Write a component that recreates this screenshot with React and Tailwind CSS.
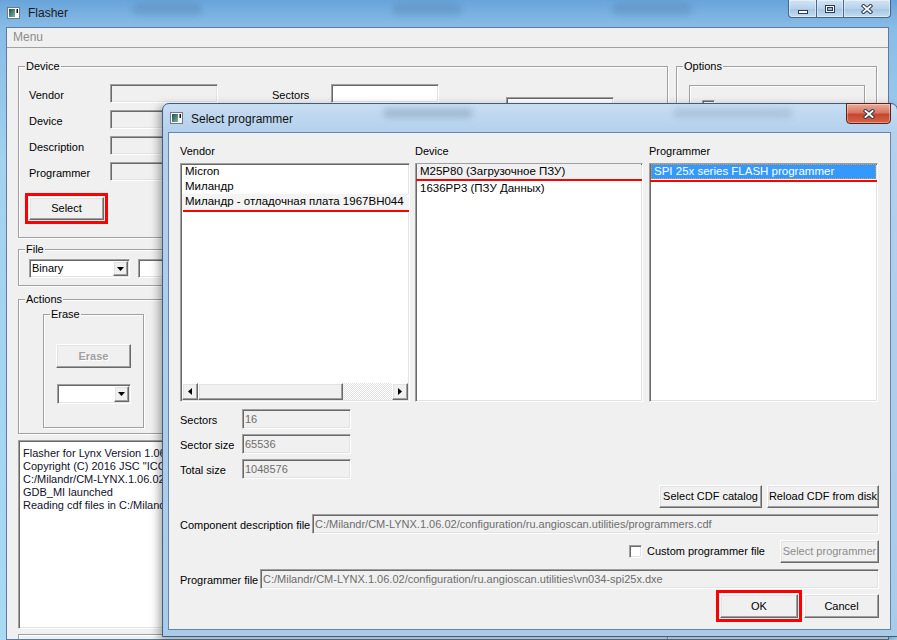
import React from "react";

// classic win32 3d borders
const sunken =
  "border border-t-[#a0a0a0] border-l-[#a0a0a0] border-r-white border-b-white shadow-[inset_1px_1px_0_#696969,inset_-1px_-1px_0_#e3e3e3]";
const raised =
  "border border-t-white border-l-white border-r-[#696969] border-b-[#696969] bg-[#f0f0f0] shadow-[inset_-1px_-1px_0_#a0a0a0,inset_1px_1px_0_#e3e3e3]";
const etched = "border border-[#a0a0a0] shadow-[inset_1px_1px_0_#ffffff,1px_1px_0_#ffffff]";

function AppIcon({ className = "" }) {
  return (
    <svg width="13" height="12" viewBox="0 0 13 12" className={`shrink-0 ${className}`}>
      <defs>
        <linearGradient id="appicon" x1="0" y1="0" x2="1" y2="1">
          <stop offset="0" stopColor="#1d4a55" />
          <stop offset="1" stopColor="#80b89c" />
        </linearGradient>
      </defs>
      <rect x="0.5" y="0.5" width="12" height="11" fill="#f7f7f7" stroke="#6f7b86" />
      <rect x="2" y="2" width="6" height="8" fill="url(#appicon)" />
      <rect x="9.5" y="2" width="1.5" height="4" fill="#111" />
    </svg>
  );
}

function XGlyph() {
  return (
    <svg width="12" height="10" viewBox="0 0 12 10">
      <path d="M2.5 2 L9.5 8 M9.5 2 L2.5 8" stroke="#2b3a4e" strokeWidth="3.8" strokeLinecap="square" />
      <path d="M2.5 2 L9.5 8 M9.5 2 L2.5 8" stroke="#ffffff" strokeWidth="1.9" strokeLinecap="square" />
    </svg>
  );
}

function Group({ title, className = "", children }) {
  return (
    <div className={`relative ${etched} ${className}`}>
      <span className="absolute -top-[7px] left-[6px] bg-[#f0f0f0] px-[1px] leading-[13px]">{title}</span>
      {children}
    </div>
  );
}

function Combo({ className = "", text = "" }) {
  return (
    <div className={`${sunken} flex bg-white ${className}`}>
      <span className="flex-1 pl-[2px] leading-[16px]">{text}</span>
      <div className={`${raised} m-[1px] flex w-[15px] items-center justify-center`}>
        <svg width="7" height="4" viewBox="0 0 7 4">
          <path d="M0 0H7L3.5 4Z" fill="#000" />
        </svg>
      </div>
    </div>
  );
}

function MainWindow() {
  return (
    <div className="flex h-full flex-col bg-[linear-gradient(180deg,#68a4da_0px,#88bce6_27px,#a3d1ef_160px,#a9d9f3_100%)]">
      {/* title bar */}
      <div className="flex h-[27px] shrink-0 items-start">
        <AppIcon className="ml-[7px] mt-[7px]" />
        <span className="ml-[8px] mt-[5px] shrink-0 whitespace-nowrap text-[12px] leading-[16px] text-[#1a1a1a]">Flasher</span>
        <span className="ml-[64px] mt-[3px] h-[12px] w-[70px] shrink-0 rounded-full bg-[#4f79a6] opacity-30 blur-[3px]" />
        <span className="ml-[190px] mt-[3px] h-[12px] w-[70px] shrink-0 rounded-full bg-[#4f79a6] opacity-30 blur-[3px]" />
        <span className="ml-[150px] mt-[3px] h-[12px] w-[80px] shrink-0 rounded-full bg-[#4f79a6] opacity-30 blur-[3px]" />
        <div className="ml-auto mr-[6px] flex h-[18px] shrink-0">
          <div className="flex w-[29px] items-end justify-center rounded-bl-[4px] border border-t-0 border-[#45658c] bg-[linear-gradient(180deg,#d2e4f4,#b7d2eb_50%,#a5c5e5_51%,#c3dcf1)] pb-[3px] shadow-[inset_0_0_0_1px_rgba(255,255,255,0.45)]">
            <svg width="10" height="4" viewBox="0 0 10 4">
              <rect x="0.5" y="0.5" width="9" height="3" fill="#fff" stroke="#2b3a4e" />
            </svg>
          </div>
          <div className="flex w-[27px] items-center justify-center border-b border-r border-[#45658c] bg-[linear-gradient(180deg,#d2e4f4,#b7d2eb_50%,#a5c5e5_51%,#c3dcf1)] shadow-[inset_0_0_0_1px_rgba(255,255,255,0.45)]">
            <svg width="10" height="8" viewBox="0 0 10 8">
              <rect x="0.5" y="0.5" width="9" height="7" fill="#fff" stroke="#2b3a4e" />
              <rect x="2.5" y="2.5" width="5" height="3" fill="#9dbddc" stroke="#2b3a4e" />
            </svg>
          </div>
          <div className="flex w-[47px] items-center justify-center rounded-br-[4px] border-b border-r border-[#45658c] bg-[linear-gradient(180deg,#d2e4f4,#b7d2eb_50%,#a5c5e5_51%,#c3dcf1)] shadow-[inset_0_0_0_1px_rgba(255,255,255,0.45)]">
            <XGlyph />
          </div>
        </div>
      </div>

      {/* client area */}
      <div className="ml-[6px] mr-[8px] flex-1 overflow-hidden border border-[#5a7ca4] bg-[#f0f0f0]">
        <div className="h-[20px] border-b border-[#a0a0a0] pl-[6px] text-[12px] leading-[19px] text-[#8d8d8d]">Menu</div>

        <div className="flex px-[11px] pt-[18px]">
          <div className="flex w-[650px] flex-col">
            <Group title="Device" className="h-[172px]">
              <div className="flex pl-[10px] pt-[17px]">
                <div className="flex flex-col">
                  {["Vendor", "Device", "Description", "Programmer"].map((l) => (
                    <div key={l} className="mb-[7px] flex h-[19px] items-center">
                      <span className="w-[81px] pt-[3px]">{l}</span>
                      <div className={`${sunken} h-[19px] w-[108px] bg-[#f0f0f0]`} />
                    </div>
                  ))}
                  <button className={`${raised} mt-[9px] h-[23px] w-[75px] outline-[3px] outline-offset-[1px] outline-[#ff0000]`}>
                    Select
                  </button>
                </div>
                <div className="ml-[54px] flex flex-col">
                  <div className="mb-[7px] flex h-[19px] items-center">
                    <span className="w-[59px] pt-[3px]">Sectors</span>
                    <div className={`${sunken} h-[19px] w-[108px] bg-white`} />
                  </div>
                  <div className="mb-[7px] flex h-[19px] items-center">
                    <span className="w-[59px]" />
                    <div className={`${sunken} h-[19px] w-[108px] bg-white`} />
                  </div>
                </div>
                <div className="ml-[67px] mt-[13px] flex flex-col gap-[7px]">
                  <div className={`${sunken} h-[19px] w-[108px] bg-white`} />
                  <div className={`${sunken} h-[19px] w-[108px] bg-white`} />
                </div>
              </div>
            </Group>

            <Group title="File" className="mt-[11px] h-[37px]">
              <div className="flex pl-[10px] pt-[9px]">
                <Combo className="h-[19px] w-[101px]" text="Binary" />
                <div className={`${sunken} ml-[8px] h-[19px] w-[300px] bg-white`} />
              </div>
            </Group>

            <Group title="Actions" className="mt-[13px] h-[135px]">
              <div className="flex pl-[24px] pt-[14px]">
                <Group title="Erase" className="h-[114px] w-[101px]">
                  <div className="flex flex-col pl-[12px] pt-[29px]">
                    <button className={`${raised} h-[24px] w-[75px] font-bold text-[#a0a0a0] [text-shadow:1px_1px_0_#ffffff]`}>
                      Erase
                    </button>
                    <Combo className="ml-[1px] mt-[16px] h-[20px] w-[74px]" />
                  </div>
                </Group>
              </div>
            </Group>

            <div className={`${sunken} mt-[6px] h-[189px] overflow-hidden whitespace-nowrap bg-white pl-[4px] pt-[6px] leading-[13px] text-[#10102a]`}>
              <div>Flasher for Lynx Version 1.06.02</div>
              <div>Copyright (C) 2016 JSC "ICC Milandr"</div>
              <div>C:/Milandr/CM-LYNX.1.06.02/configuration</div>
              <div>GDB_MI launched</div>
              <div>Reading cdf files in C:/Milandr/CM-LYNX.1.06.02</div>
            </div>

            <div className={`${etched} mt-[5px] h-[40px]`} />
          </div>

          <Group title="Options" className="ml-[8px] h-[560px] w-[201px]">
            <div className="pl-[12px] pt-[18px]">
              <div className={`${etched} h-[200px] w-[176px] pl-[12px] pt-[14px]`}>
                <div className={`${sunken} h-[13px] w-[13px] bg-white`} />
              </div>
            </div>
          </Group>
        </div>
      </div>
    </div>
  );
}

function ListBox({ children, className = "" }) {
  return <div className={`${sunken} flex h-[239px] flex-col overflow-hidden bg-white ${className}`}>{children}</div>;
}

function Field({ className = "", children }) {
  return (
    <div className={`${sunken} h-[20px] overflow-hidden whitespace-nowrap bg-[#f0f0f0] pl-[2px] leading-[18px] text-[#6d6d6d] ${className}`}>
      {children}
    </div>
  );
}

function SelectDialog() {
  return (
    <div className="absolute left-[162px] top-[103px] flex h-[534px] w-[736px] flex-col rounded-t-[7px] border border-[#3d5d84] bg-[linear-gradient(180deg,#c8def2_0px,#b3d0ec_28px,#a9cbea_100%)] shadow-[-3px_3px_10px_rgba(0,0,0,0.35)]">
      {/* title bar */}
      <div className="flex h-[28px] shrink-0 items-start">
        <AppIcon className="ml-[7px] mt-[8px]" />
        <span className="ml-[8px] mt-[7px] shrink-0 whitespace-nowrap text-[12px] leading-[16px] text-[#111]">Select programmer</span>
        <span className="ml-[90px] mt-[4px] h-[10px] w-[90px] shrink-0 rounded-full bg-[#5d7896] opacity-30 blur-[3px]" />
        <span className="ml-[200px] mt-[4px] h-[10px] w-[120px] shrink-0 rounded-full bg-[#5d7896] opacity-20 blur-[3px]" />
        <div className="-mt-[1px] ml-auto mr-[6px] flex h-[21px] w-[45px] shrink-0 items-center justify-center rounded-b-[4px] border border-[#5b2219] bg-[linear-gradient(180deg,#eaab9d_0%,#d8765f_45%,#c4472e_55%,#d66247_100%)] shadow-[inset_0_0_0_1px_rgba(255,255,255,0.35)]">
          <XGlyph />
        </div>
      </div>

      {/* client */}
      <div className="ml-[5px] flex h-[498px] w-[723px] flex-col border border-[#6485ad] bg-[#f0f0f0] px-[11px] pt-[12px]">
        <div className="flex">
          <div className="w-[230px]">
            <div className="mb-[5px] h-[13px] leading-[13px]">Vendor</div>
            <ListBox className="text-[11.5px]">
              <div className="h-[15px] whitespace-nowrap pl-[4px] leading-[15px]">Micron</div>
              <div className="h-[15px] whitespace-nowrap pl-[4px] leading-[15px]">Миландр</div>
              <div className="ml-[1px] h-[16px] whitespace-nowrap bg-[#f4f4f4] pl-[3px] leading-[15px]">
                Миландр - отладочная плата 1967ВН044
              </div>
              <div className="ml-[2px] h-[2px] bg-[#ff0000]" />
              <div className="mx-[1px] mb-[1px] mt-auto flex h-[17px]">
                <div className={`${raised} flex w-[16px] items-center justify-center`}>
                  <svg width="4" height="7" viewBox="0 0 4 7">
                    <path d="M4 0L0 3.5L4 7Z" fill="#000" />
                  </svg>
                </div>
                <div className={`${raised} w-[145px]`} />
                <div className="flex-1 bg-[repeating-conic-gradient(#e2e2e2_0%_25%,#ffffff_0%_50%)] bg-[length:2px_2px]" />
                <div className={`${raised} flex w-[16px] items-center justify-center`}>
                  <svg width="4" height="7" viewBox="0 0 4 7">
                    <path d="M0 0L4 3.5L0 7Z" fill="#000" />
                  </svg>
                </div>
              </div>
            </ListBox>
          </div>

          <div className="ml-[5px] w-[228px]">
            <div className="mb-[5px] h-[13px] leading-[13px]">Device</div>
            <ListBox className="text-[11.5px]">
              <div className="mx-[1px] h-[15px] whitespace-nowrap bg-[#f0f0f0] pl-[3px] leading-[15px]">M25P80 (Загрузочное ПЗУ)</div>
              <div className="h-[2px] bg-[#ff0000]" />
              <div className="h-[15px] whitespace-nowrap pl-[4px] leading-[15px]">1636PP3 (ПЗУ Данных)</div>
            </ListBox>
          </div>

          <div className="ml-[6px] w-[229px]">
            <div className="mb-[5px] h-[13px] leading-[13px]">Programmer</div>
            <ListBox className="text-[11.5px]">
              <div className="mx-[1px] h-[15px] whitespace-nowrap border border-dotted border-[#d99a4a] bg-[#3399ff] pl-[2px] leading-[13px] text-white">
                SPI 25x series FLASH programmer
              </div>
              <div className="mt-[1px] h-[2px] bg-[#ff0000]" />
            </ListBox>
          </div>
        </div>

        <div className="mt-[7px] flex flex-col gap-[5px]">
          {[
            ["Sectors", "16"],
            ["Sector size", "65536"],
            ["Total size", "1048576"],
          ].map(([l, v]) => (
            <div key={l} className="flex h-[20px] items-center">
              <span className="w-[62px] pt-[3px]">{l}</span>
              <Field className="w-[109px]">{v}</Field>
            </div>
          ))}
        </div>

        <div className="mt-[6px] flex justify-end gap-[5px]">
          <button className={`${raised} h-[23px] w-[103px]`}>Select CDF catalog</button>
          <button className={`${raised} h-[23px] w-[112px]`}>Reload CDF from disk</button>
        </div>

        <div className="mt-[6px] flex h-[20px] items-center">
          <span className="w-[132px] whitespace-nowrap pt-[2px]">Component description file</span>
          <Field className="flex-1">C:/Milandr/CM-LYNX.1.06.02/configuration/ru.angioscan.utilities/programmers.cdf</Field>
        </div>

        <div className="mt-[6px] flex h-[23px] items-center justify-end">
          <div className={`${sunken} h-[13px] w-[13px] bg-white`} />
          <span className="ml-[5px]">Custom programmer file</span>
          <button className={`${raised} ml-[15px] h-[23px] w-[99px] text-[#8d8d8d]`}>Select programmer</button>
        </div>

        <div className="mt-[6px] flex h-[20px] items-center">
          <span className="w-[80px] whitespace-nowrap pt-[2px]">Programmer file</span>
          <Field className="flex-1">C:/Milandr/CM-LYNX.1.06.02/configuration/ru.angioscan.utilities\vn034-spi25x.dxe</Field>
        </div>

        <div className="mt-[5px] flex justify-end gap-[6px]">
          <button className={`${raised} h-[24px] w-[78px] outline-[3px] outline-offset-[1px] outline-[#ff0000]`}>OK</button>
          <button className={`${raised} h-[24px] w-[75px]`}>Cancel</button>
        </div>
      </div>
    </div>
  );
}

export default function App() {
  return (
    <div className="relative h-[640px] w-[897px] overflow-hidden font-['Liberation_Sans',Arial,sans-serif] text-[11px] leading-[13px] text-black">
      <MainWindow />
      <SelectDialog />
    </div>
  );
}
